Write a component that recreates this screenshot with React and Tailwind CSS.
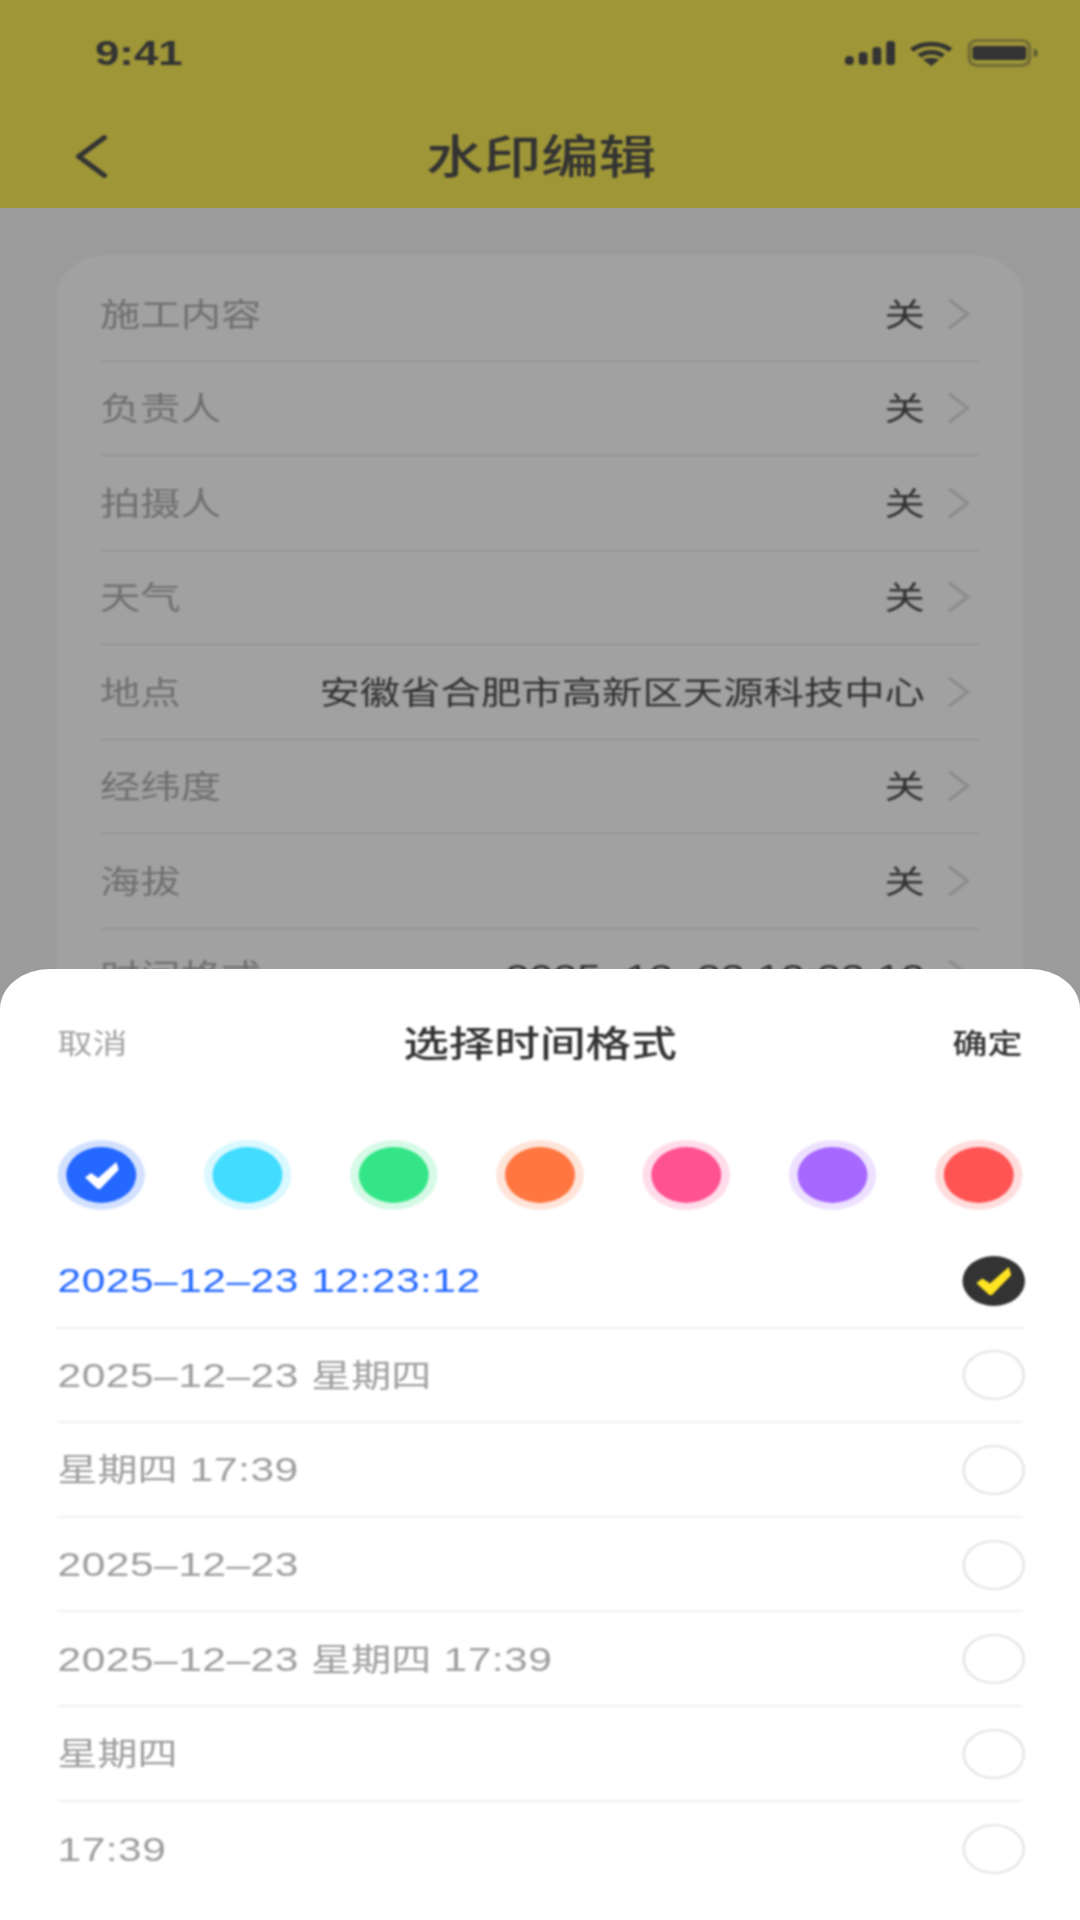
const settings = [
  { label: '施工内容', value: '关' },
  { label: '负责人', value: '关' },
  { label: '拍摄人', value: '关' },
  { label: '天气', value: '关' },
  { label: '地点', value: '安徽省合肥市高新区天源科技中心' },
  { label: '经纬度', value: '关' },
  { label: '海拔', value: '关' },
  { label: '时间格式', value: '2025–12–23 12:23:12', numeric: true },
];

const colors = [
  { id: 'blue', dot: 'bg-[#2468ff]', ring: 'bg-[#2468ff]/20', active: true },
  { id: 'cyan', dot: 'bg-[#42dcff]', ring: 'bg-[#42dcff]/20' },
  { id: 'green', dot: 'bg-[#33e586]', ring: 'bg-[#33e586]/20' },
  { id: 'orange', dot: 'bg-[#ff7640]', ring: 'bg-[#ff7640]/20' },
  { id: 'pink', dot: 'bg-[#ff5290]', ring: 'bg-[#ff5290]/20' },
  { id: 'purple', dot: 'bg-[#a668ff]', ring: 'bg-[#a668ff]/20' },
  { id: 'red', dot: 'bg-[#ff5454]', ring: 'bg-[#ff5454]/20' },
];

const formats = [
  '2025–12–23 12:23:12',
  '2025–12–23 星期四',
  '星期四 17:39',
  '2025–12–23',
  '2025–12–23 星期四 17:39',
  '星期四',
  '17:39',
];

function Check({ className }) {
  return (
    <svg viewBox="0 0 28 28" className={className} fill="currentColor">
      <path d="M0 16 L5 11.5 L11 16.5 L26 0 L28 8 L12.5 28 L10.5 28 Z" />
    </svg>
  );
}

function StatusIcons() {
  return (
    <div className="flex items-center gap-3 text-[#515151]">
      <svg viewBox="0 0 40 24" className="w-10 h-6" fill="currentColor">
        <rect x="0" y="15" width="7" height="9" rx="3.5" />
        <rect x="11" y="11" width="7" height="13" rx="3" />
        <rect x="22" y="6" width="7" height="18" rx="3" />
        <rect x="33" y="0" width="7" height="24" rx="3" />
      </svg>
      <svg viewBox="0 0 34 25" className="w-[34px] h-[25px]" fill="none" stroke="currentColor" strokeWidth="4.5">
        <path d="M1.5 9 C10 1 24 1 32.5 9" />
        <path d="M7.5 15 C13 10 21 10 26.5 15" />
        <path d="M17 25 L10.5 18.5 C14.5 16.5 19.5 16.5 23.5 18.5 Z" fill="currentColor" stroke="none" />
      </svg>
      <div className="flex items-center gap-[2px]">
        <div className="w-[51px] h-7 rounded-[8px] border-[3px] border-[#515151]/40 px-[1px] py-[4px]">
          <div className="w-full h-full rounded-[3px] bg-[#515151]" />
        </div>
        <div className="w-[3px] h-2 rounded-r bg-[#515151]/60" />
      </div>
    </div>
  );
}

// latin digits are set a little larger than the chinese, as in the source
function MixedText({ text }) {
  return text.split(/([\u4e00-\u9fff]+)/).map((part, i) =>
    /[\u4e00-\u9fff]/.test(part) ? <span key={i} className="text-[32px] tracking-normal">{part}</span> : part
  );
}

function SettingRow({ item }) {
  return (
    <div className="h-[94.5px] flex items-center justify-between border-b border-[#e2e2e2] text-[32.3px] shrink-0">
      <span className="text-[#b2b2b2] pt-[2px]">{item.label}</span>
      <div className="flex items-center text-[#515151]">
        <span className={`pt-[2px] ${item.numeric ? 'text-[34px] tracking-[0.25px]' : ''}`}>{item.value}</span>
        <svg viewBox="0 0 19 32" className="w-[19px] h-8 ml-[17px] mr-[8px] text-[#dedede]" fill="none" stroke="currentColor" strokeWidth="3">
          <path d="M2 1.5 L17 16 L2 30.5" />
        </svg>
      </div>
    </div>
  );
}

function FormatRow({ text, selected, last }) {
  return (
    <div className={`h-[94.6px] flex items-center justify-between shrink-0 ${last ? '' : 'border-b-2 border-[#f0f0f0]'}`}>
      <span className={`pt-[1px] text-[34px] tracking-[0.4px] ${selected ? 'text-[#2468ff]' : 'text-[#9e9e9e]'}`}>
        <MixedText text={text} />
      </span>
      {selected ? (
        <div className="w-[50px] h-[50px] mt-[1px] -mr-[2px] rounded-full bg-[#333333] flex items-center justify-center text-[#ffe422]">
          <Check className="w-7 h-7" />
        </div>
      ) : (
        <div className="w-[50px] h-[50px] mt-[1px] -mr-[2px] rounded-full border-2 border-[#e4e4e4]" />
      )}
    </div>
  );
}

export default function App() {
  return (
    <div className="w-[1080px] h-[1920px] overflow-hidden bg-white">
      {/* the source is stretched 1.25x sideways, so everything is laid out at 864 wide */}
      <div className="relative w-[864px] h-[1920px] origin-top-left scale-x-125 overflow-hidden bg-[#f6f6f6] font-[family-name:'Liberation_Sans','Noto_Sans_CJK_SC',sans-serif]">
        <div className="h-[208px] bg-[#fcee59] text-[#515151]">
          <div className="blur-[0.8px]">
            <div className="h-[106px] pl-[76px] pr-[34px] flex items-center justify-between">
              <span className="text-[35px] font-bold">9:41</span>
              <StatusIcons />
            </div>
            <div className="relative h-[100px] flex items-center justify-center">
              <svg viewBox="0 0 26 43" className="absolute left-[60px] top-[29px] w-[26px] h-[43px]" fill="none" stroke="currentColor" strokeWidth="4.5" strokeLinecap="round" strokeLinejoin="round">
                <path d="M23.5 2.5 L3 21.5 L23.5 40.5" />
              </svg>
              <span className="pt-[3px] pl-[2px] text-[46px] font-medium">水印编辑</span>
            </div>
          </div>
        </div>

        <div className="px-[46px] pt-[47px]">
          <div className="rounded-[40px] bg-white px-[34px] pt-[12px] pb-10 flex flex-col blur-[0.8px]">
            {settings.map(item => (
              <SettingRow key={item.label} item={item} />
            ))}
          </div>
        </div>

        <div className="absolute inset-0 bg-black/[0.37]" />

        <div className="absolute left-0 right-0 top-[969px] bottom-0 rounded-t-[40px] bg-white px-[46px]">
          <div className="blur-[0.8px]">
            <div className="h-[150px] pt-[2px] flex items-center justify-between">
              <span className="text-[28px] text-[#a3a3a3]">取消</span>
              <span className="text-[36.5px] font-medium text-[#333333]">选择时间格式</span>
              <span className="text-[28px] font-medium text-[#333333]">确定</span>
            </div>

            <div className="mt-[21px] flex justify-between">
              {colors.map(c => (
                <div key={c.id} className={`w-[70px] h-[70px] rounded-full flex items-center justify-center ${c.ring}`}>
                  <div className={`w-[56px] h-[56px] rounded-full flex items-center justify-center text-white ${c.dot}`}>
                    {c.active && <Check className="w-[27px] h-[27px]" />}
                  </div>
                </div>
              ))}
            </div>

            <div className="mt-[24px] flex flex-col">
              {formats.map((text, i) => (
                <FormatRow key={text} text={text} selected={i === 0} last={i === formats.length - 1} />
              ))}
            </div>
          </div>
        </div>
      </div>
    </div>
  );
}
